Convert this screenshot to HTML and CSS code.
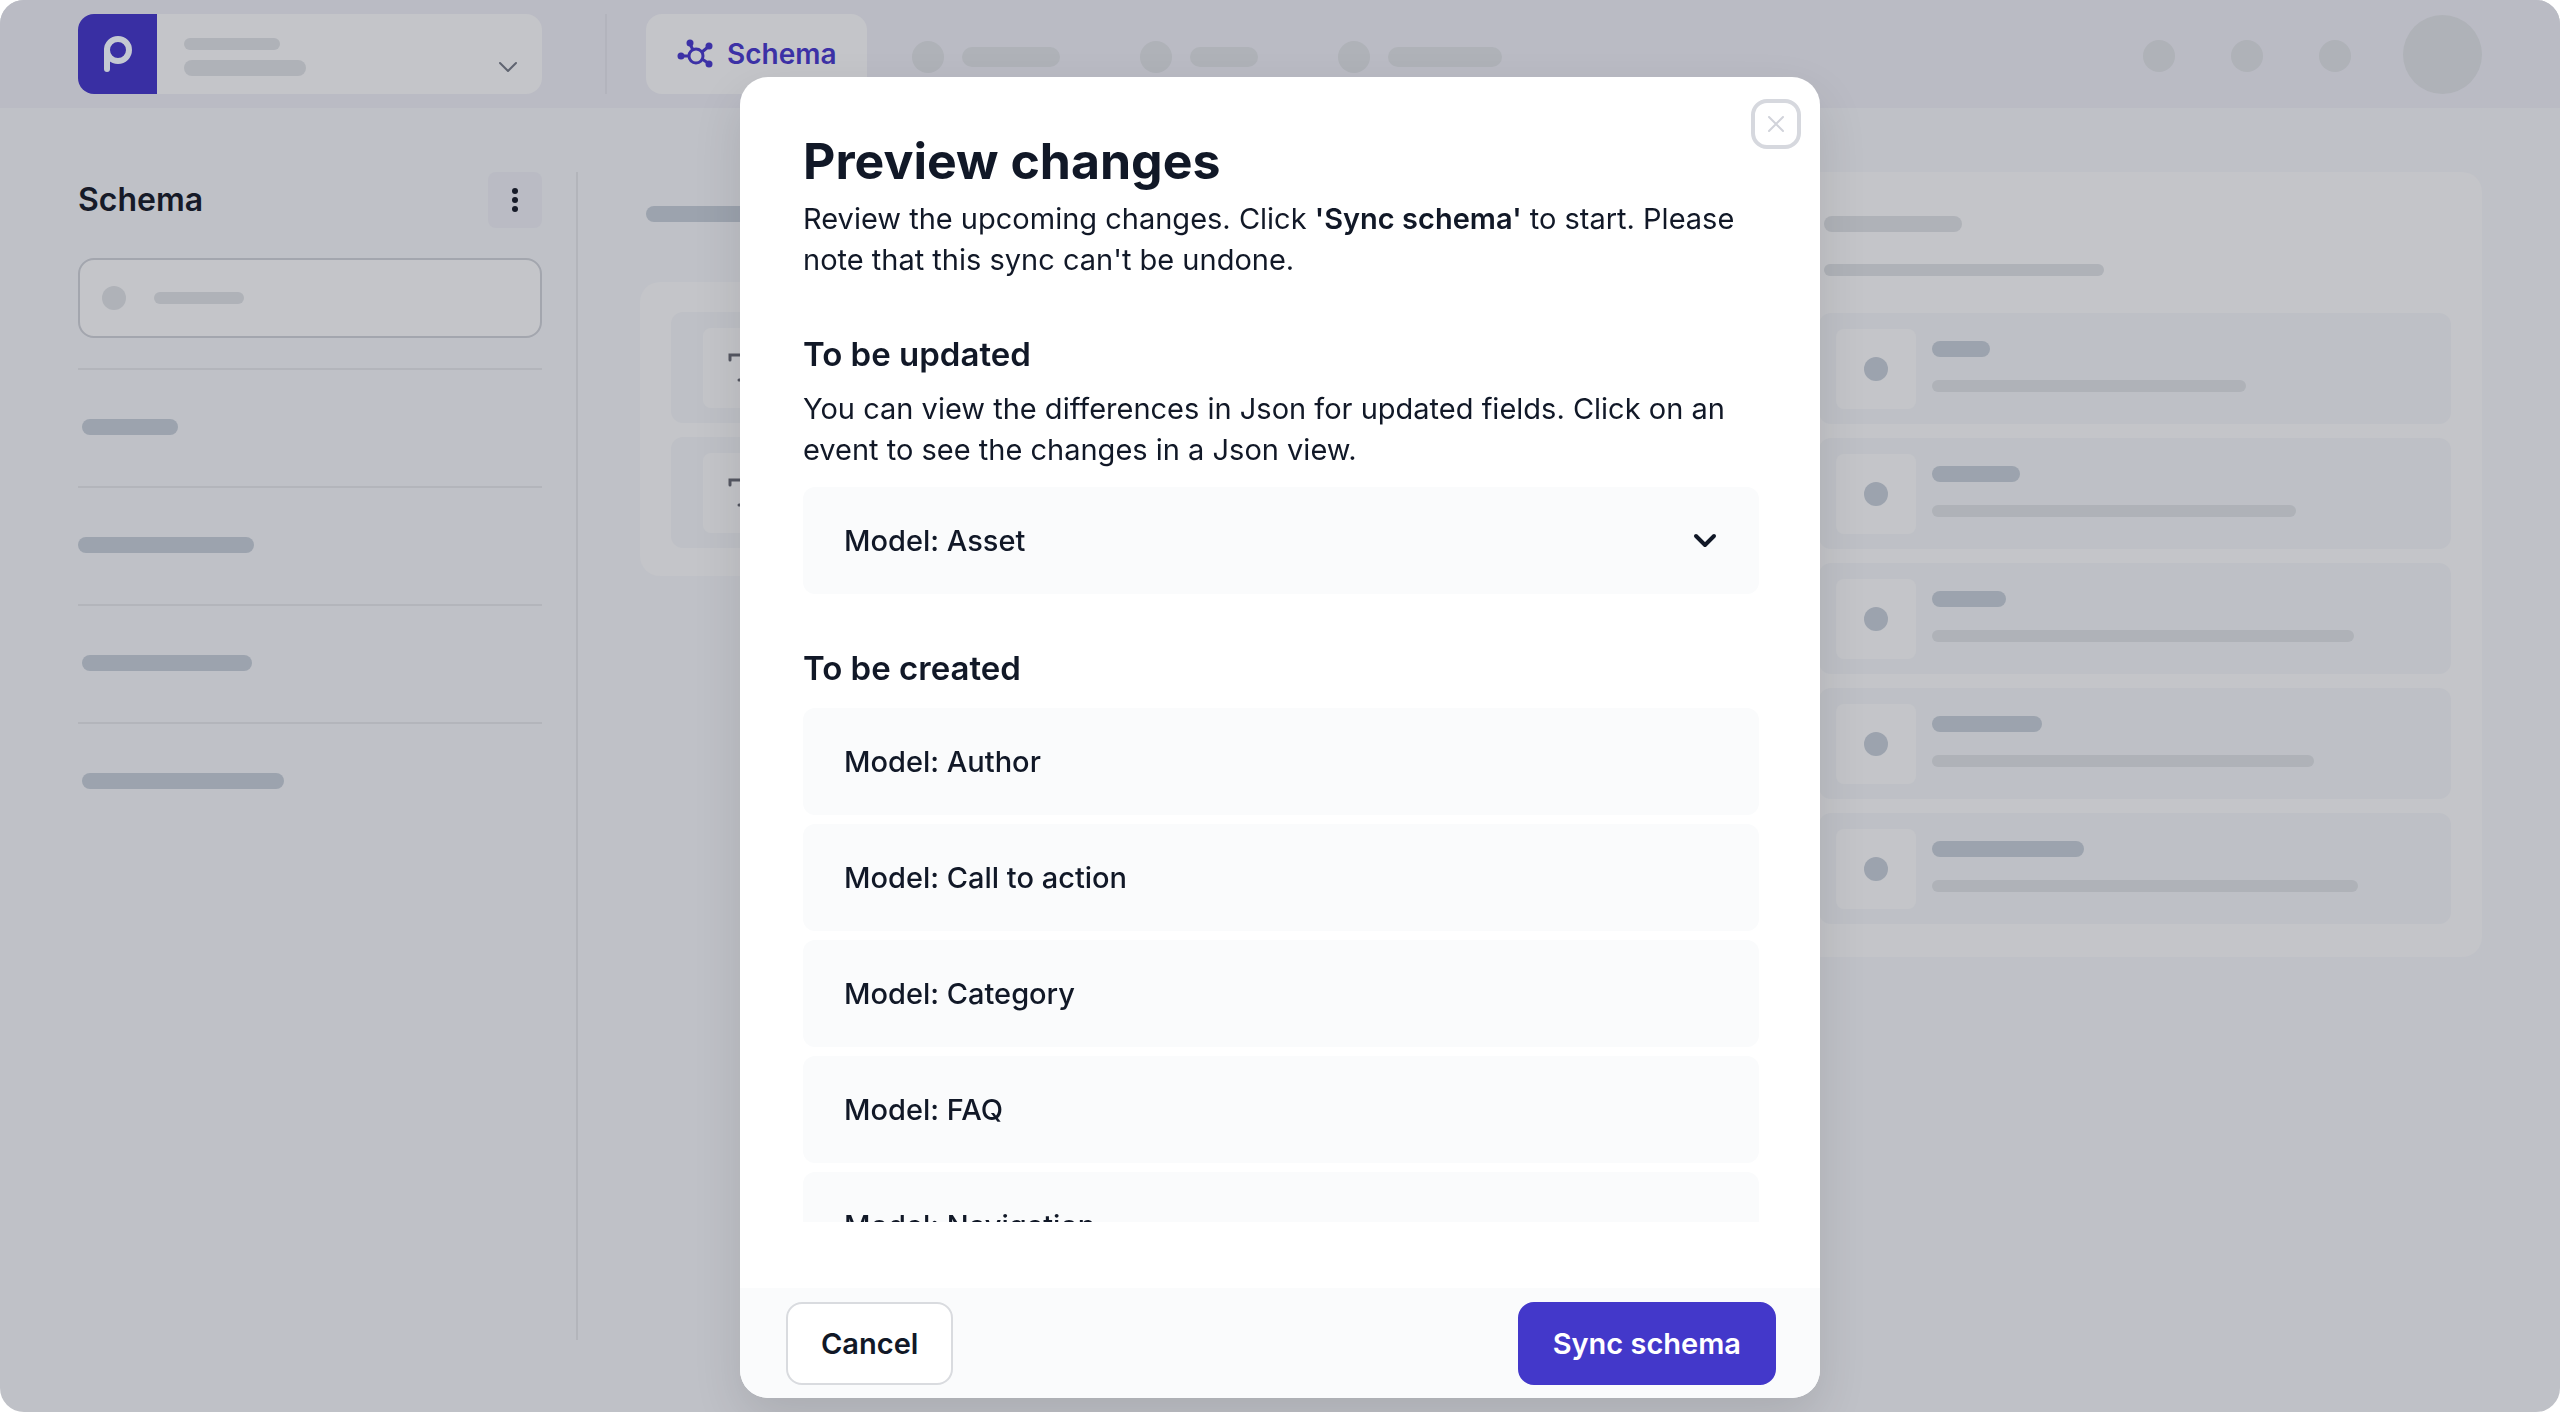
FILE: index.html
```
<!DOCTYPE html>
<html lang="en">
<head>
    <meta charset="UTF-8">
    <meta name="viewport" content="width=device-width, initial-scale=1.0">
    <title>Schema - Preview changes</title>
    <link rel="stylesheet" href="styles.css">
</head>
<body>

<div class="app">
    <!-- Top bar -->
    <header class="topbar">
        <button class="switcher" type="button" aria-label="Switch project">
            <span class="logo">
                <svg width="30" height="38" viewBox="0 0 30 38" fill="none" stroke="#c4c9d2" stroke-width="6" stroke-linecap="round">
                    <circle cx="15" cy="15" r="11"/>
                    <path d="M4 15V34"/>
                </svg>
            </span>
            <span class="switcher-text">
                <span class="bar bar-small w-96"></span>
                <span class="bar w-122"></span>
            </span>
            <svg class="switcher-arrow" width="20" height="14" viewBox="0 0 20 14" fill="none" stroke="#5f6470" stroke-width="2" stroke-linecap="round" stroke-linejoin="round">
                <path d="M2 3l8 8 8-8"/>
            </svg>
        </button>

        <nav class="tabs">
            <a href="#" class="tab-active">
                <svg width="36" height="30" viewBox="0 0 36 30" fill="none" stroke="#3c31a6" stroke-width="3">
                    <circle cx="19" cy="17" r="7"/>
                    <path d="M12 17H4M16 11l-4-8M25 13l6-5M25 20l6 4"/>
                    <g fill="#3c31a6" stroke="none">
                        <circle cx="4" cy="17" r="3.5"/>
                        <circle cx="13" cy="4" r="3.5"/>
                        <circle cx="32" cy="7" r="3.5"/>
                        <circle cx="32" cy="25" r="3.5"/>
                    </g>
                </svg>
                Schema
            </a>
            <span class="tab-ghost"><i class="dot"></i><i class="bar bar-large w-98"></i></span>
            <span class="tab-ghost"><i class="dot"></i><i class="bar bar-large w-68"></i></span>
            <span class="tab-ghost"><i class="dot"></i><i class="bar bar-large w-114"></i></span>
        </nav>

        <div class="actions">
            <i class="dot"></i>
            <i class="dot"></i>
            <i class="dot"></i>
            <i class="avatar"></i>
        </div>
    </header>

    <div class="layout">
        <!-- Sidebar -->
        <aside class="sidebar">
            <div class="sidebar-head">
                <h2>Schema</h2>
                <button class="kebab" type="button" aria-label="More options">
                    <svg width="6" height="24" viewBox="0 0 6 24" fill="#161a28">
                        <circle cx="3" cy="3" r="3"/>
                        <circle cx="3" cy="12" r="3"/>
                        <circle cx="3" cy="21" r="3"/>
                    </svg>
                </button>
            </div>
            <label class="search">
                <i class="dot dot-small"></i>
                <i class="bar bar-small w-90"></i>
                <input type="search" aria-label="Search">
            </label>
            <ul class="groups">
                <li><i class="bar bar-dark w-96"></i></li>
                <li class="flush"><i class="bar bar-dark w-176"></i></li>
                <li><i class="bar bar-dark w-170"></i></li>
                <li><i class="bar bar-dark w-202"></i></li>
            </ul>
        </aside>

        <!-- Content -->
        <main class="content">
            <section class="models">
                <i class="bar bar-dark w-202"></i>
                <div class="panel models-panel">
                    <div class="row">
                        <span class="tile">
                            <svg width="32" height="32" viewBox="0 0 32 32" fill="none" stroke="#565863" stroke-width="3" stroke-linecap="round"><path d="M3 8V3H29V8M16 3V28M12 28H20"/></svg>
                        </span>
                    </div>
                    <div class="row">
                        <span class="tile">
                            <svg width="32" height="32" viewBox="0 0 32 32" fill="none" stroke="#565863" stroke-width="3" stroke-linecap="round"><path d="M3 8V3H29V8M16 3V28M12 28H20"/></svg>
                        </span>
                    </div>
                </div>
            </section>

            <section class="panel fields">
                <div class="fields-head">
                    <i class="bar w-138"></i>
                    <i class="bar bar-small w-280"></i>
                </div>
                <div class="row">
                    <span class="tile"><i class="dot dot-small dot-dark"></i></span>
                    <span class="row-text"><i class="bar bar-dark w-58"></i><i class="bar bar-small w-314"></i></span>
                </div>
                <div class="row">
                    <span class="tile"><i class="dot dot-small dot-dark"></i></span>
                    <span class="row-text"><i class="bar bar-dark w-88"></i><i class="bar bar-small w-364"></i></span>
                </div>
                <div class="row">
                    <span class="tile"><i class="dot dot-small dot-dark"></i></span>
                    <span class="row-text"><i class="bar bar-dark w-74"></i><i class="bar bar-small w-422"></i></span>
                </div>
                <div class="row">
                    <span class="tile"><i class="dot dot-small dot-dark"></i></span>
                    <span class="row-text"><i class="bar bar-dark w-110"></i><i class="bar bar-small w-382"></i></span>
                </div>
                <div class="row">
                    <span class="tile"><i class="dot dot-small dot-dark"></i></span>
                    <span class="row-text"><i class="bar bar-dark w-152"></i><i class="bar bar-small w-426"></i></span>
                </div>
            </section>
        </main>
    </div>
</div>

<!-- Preview changes dialog -->
<div class="overlay">
    <div class="modal" role="dialog" aria-modal="true" aria-labelledby="modalTitle">
        <button class="close" type="button" aria-label="Close">
            <svg width="16" height="16" viewBox="0 0 16 16" fill="none" stroke="#d1d3da" stroke-width="2" stroke-linecap="round">
                <path d="M1 1l14 14M15 1L1 15"/>
            </svg>
        </button>

        <div class="modal-body">
            <h1 id="modalTitle">Preview changes</h1>
            <p>Review the upcoming changes. Click <strong>'Sync schema'</strong> to start. Please note that this sync can't be undone.</p>

            <h3>To be updated</h3>
            <p>You can view the differences in Json for updated fields. Click on an event to see the changes in a Json view.</p>
            <button class="model" type="button">
                Model: Asset
                <svg width="26" height="16" viewBox="0 0 26 16" fill="none" stroke="#111827" stroke-width="4" stroke-linecap="round" stroke-linejoin="round">
                    <path d="M4 3l9 9 9-9"/>
                </svg>
            </button>

            <h3>To be created</h3>
            <ul class="created">
                <li class="model">Model: Author</li>
                <li class="model">Model: Call to action</li>
                <li class="model">Model: Category</li>
                <li class="model">Model: FAQ</li>
                <li class="model">Model: Navigation</li>
            </ul>
        </div>

        <footer class="modal-footer">
            <button class="btn" type="button">Cancel</button>
            <button class="btn btn-primary" type="button">Sync schema</button>
        </footer>
    </div>
</div>

</body>
</html>
```
FILE: styles.css
```
* {
    box-sizing: border-box;
}

body {
    margin: 0;
    background: #fff;
    color: #111827;
    font-family: Inter, "Liberation Sans", sans-serif;
    font-size: 29px;
    line-height: 41px;
    overflow: hidden;
}

h1, h2, h3, p, ul {
    margin: 0;
    padding: 0;
}

ul {
    list-style: none;
}

button {
    font: inherit;
    color: inherit;
    border: none;
    padding: 0;
    cursor: pointer;
}

svg {
    display: block;
    flex: none;
}

.app {
    min-height: 100vh;
    background: #bfc1c7;
    border-radius: 24px;
    overflow: hidden;
}

/* Placeholder shapes */
.bar {
    display: block;
    flex: none;
    height: 16px;
    border-radius: 8px;
    background: #afb2b8;
}

.bar-small {
    height: 12px;
    border-radius: 6px;
}

.bar-large {
    height: 20px;
    border-radius: 10px;
}

.bar-dark {
    background: #9ca3ae;
}

.dot {
    display: block;
    flex: none;
    width: 32px;
    height: 32px;
    border-radius: 50%;
    background: #afb2b8;
}

.dot-small {
    width: 24px;
    height: 24px;
}

.dot-dark {
    background: #9ca3ae;
}

.w-58 { width: 58px; }
.w-68 { width: 68px; }
.w-74 { width: 74px; }
.w-88 { width: 88px; }
.w-90 { width: 90px; }
.w-96 { width: 96px; }
.w-98 { width: 98px; }
.w-110 { width: 110px; }
.w-114 { width: 114px; }
.w-122 { width: 122px; }
.w-138 { width: 138px; }
.w-152 { width: 152px; }
.w-170 { width: 170px; }
.w-176 { width: 176px; }
.w-202 { width: 202px; }
.w-280 { width: 280px; }
.w-314 { width: 314px; }
.w-364 { width: 364px; }
.w-382 { width: 382px; }
.w-422 { width: 422px; }
.w-426 { width: 426px; }

/* Top bar */
.topbar {
    display: flex;
    align-items: center;
    height: 108px;
    padding: 0 78px;
    background: #babbc4;
}

.switcher {
    display: flex;
    width: 464px;
    height: 80px;
    background: #c4c5c9;
    border-radius: 16px;
    overflow: hidden;
}

.logo {
    display: flex;
    align-items: center;
    justify-content: center;
    width: 79px;
    height: 80px;
    background: #392fa3;
}

.switcher-text {
    display: flex;
    flex: 1;
    flex-direction: column;
    gap: 10px;
    padding: 24px 27px 0;
}

.switcher-arrow {
    align-self: flex-end;
    margin: 0 24px 20px 0;
}

.tabs {
    display: flex;
    align-items: center;
    height: 80px;
    margin-left: 63px;
    padding-left: 39px;
    border-left: 2px solid #b3b4bd;
}

.tab-active {
    display: flex;
    align-items: center;
    gap: 14px;
    width: 221px;
    height: 80px;
    margin-right: 45px;
    padding-left: 31px;
    background: #c4c5c9;
    border-radius: 16px;
    color: #3c31a6;
    font-size: 28px;
    font-weight: 600;
    text-decoration: none;
}

.tab-ghost {
    display: flex;
    align-items: center;
    gap: 18px;
    margin-right: 80px;
    padding-top: 5px;
}

.actions {
    display: flex;
    align-items: center;
    gap: 56px;
    margin-left: auto;
}

.actions .dot {
    margin-top: 4px;
}

.avatar {
    width: 79px;
    height: 79px;
    margin-left: -4px;
    border-radius: 50%;
    background: #afb2b8;
}

/* Page layout */
.layout {
    display: flex;
    padding: 64px 78px 72px;
}

.sidebar {
    width: 500px;
    min-height: calc(100vh - 244px);
    padding-right: 34px;
    border-right: 2px solid #b3b5bb;
}

.sidebar-head {
    display: flex;
    align-items: center;
    justify-content: space-between;
    height: 56px;
    margin-bottom: 30px;
}

.sidebar-head h2 {
    font-size: 32px;
    font-weight: 600;
    line-height: 40px;
    color: #161a28;
}

.kebab {
    display: flex;
    align-items: center;
    justify-content: center;
    width: 54px;
    height: 56px;
    background: #babbc4;
    border-radius: 8px;
}

.search {
    display: flex;
    align-items: center;
    gap: 28px;
    height: 80px;
    padding: 0 22px;
    background: #c4c5c9;
    border: 2px solid #a3a6ae;
    border-radius: 16px;
}

.search input {
    flex: 1;
    min-width: 0;
    background: none;
    border: none;
    outline: none;
    font: inherit;
}

.groups {
    margin-top: 30px;
}

.groups li {
    height: 118px;
    padding: 49px 4px;
    border-top: 2px solid #b3b5bb;
}

.groups .flush {
    padding-left: 0;
}

.content {
    display: flex;
    flex: 1;
    align-items: flex-start;
    gap: 40px;
    padding-left: 62px;
}

.panel {
    padding: 30px 31px 33px;
    background: #c4c5c9;
    border-radius: 20px;
}

.models {
    flex: 1;
    padding-top: 34px;
}

.models > .bar {
    margin: 0 6px 60px;
}

.models-panel {
    padding-bottom: 28px;
}

.fields {
    width: 694px;
}

.fields-head {
    display: flex;
    flex-direction: column;
    gap: 32px;
    padding: 14px 5px 37px;
}

.row {
    display: flex;
    gap: 16px;
    height: 111px;
    padding: 16px 17px;
    background: #bec0c6;
    border-radius: 12px;
}

.row + .row {
    margin-top: 14px;
}

.models .row {
    padding-left: 32px;
}

.tile {
    display: flex;
    align-items: center;
    justify-content: center;
    width: 80px;
    height: 80px;
    background: #c4c5c9;
    border-radius: 8px;
}

.row-text {
    display: flex;
    flex-direction: column;
    gap: 23px;
    padding-top: 12px;
}

/* Modal */
.overlay {
    position: fixed;
    inset: 0;
    display: flex;
    justify-content: center;
    padding: 77px 24px 14px;
}

.modal {
    position: relative;
    display: flex;
    flex-direction: column;
    width: 100%;
    max-width: 1080px;
    background: #fff;
    border-radius: 28px;
    box-shadow: 0 20px 50px rgba(0, 0, 0, 0.11);
}

.close {
    position: absolute;
    top: 22px;
    right: 19px;
    display: flex;
    align-items: center;
    justify-content: center;
    width: 50px;
    height: 50px;
    background: #fff;
    border: 4px solid #d6d8de;
    border-radius: 16px;
}

.modal-body {
    flex: 1;
    min-height: 0;
    margin: 54px 61px 66px 63px;
    overflow: hidden;
}

.modal-body h1 {
    font-size: 50px;
    font-weight: 700;
    line-height: 60px;
    margin-bottom: 7px;
}

.modal-body h3 {
    font-size: 33px;
    font-weight: 600;
    line-height: 40px;
    margin: 54px 0 14px;
}

.modal-body strong {
    font-weight: 600;
}

.model {
    display: flex;
    align-items: center;
    justify-content: space-between;
    width: 100%;
    height: 107px;
    padding: 0 41px;
    background: #fafbfc;
    border-radius: 12px;
    font-weight: 500;
}

.modal-body p + .model {
    margin-top: 17px;
}

.created {
    padding-top: 6px;
}

.created .model + .model {
    margin-top: 9px;
}

.modal-footer {
    display: flex;
    align-items: center;
    justify-content: space-between;
    height: 110px;
    padding: 0 44px 0 46px;
    background: #fafbfc;
    border-radius: 0 0 28px 28px;
}

.btn {
    height: 83px;
    padding: 0 33px;
    background: #fff;
    border: 2px solid #d9dbdf;
    border-radius: 16px;
    font-weight: 600;
}

.btn-primary {
    background: #4338ca;
    border-color: #4338ca;
    color: #fff;
}
```
